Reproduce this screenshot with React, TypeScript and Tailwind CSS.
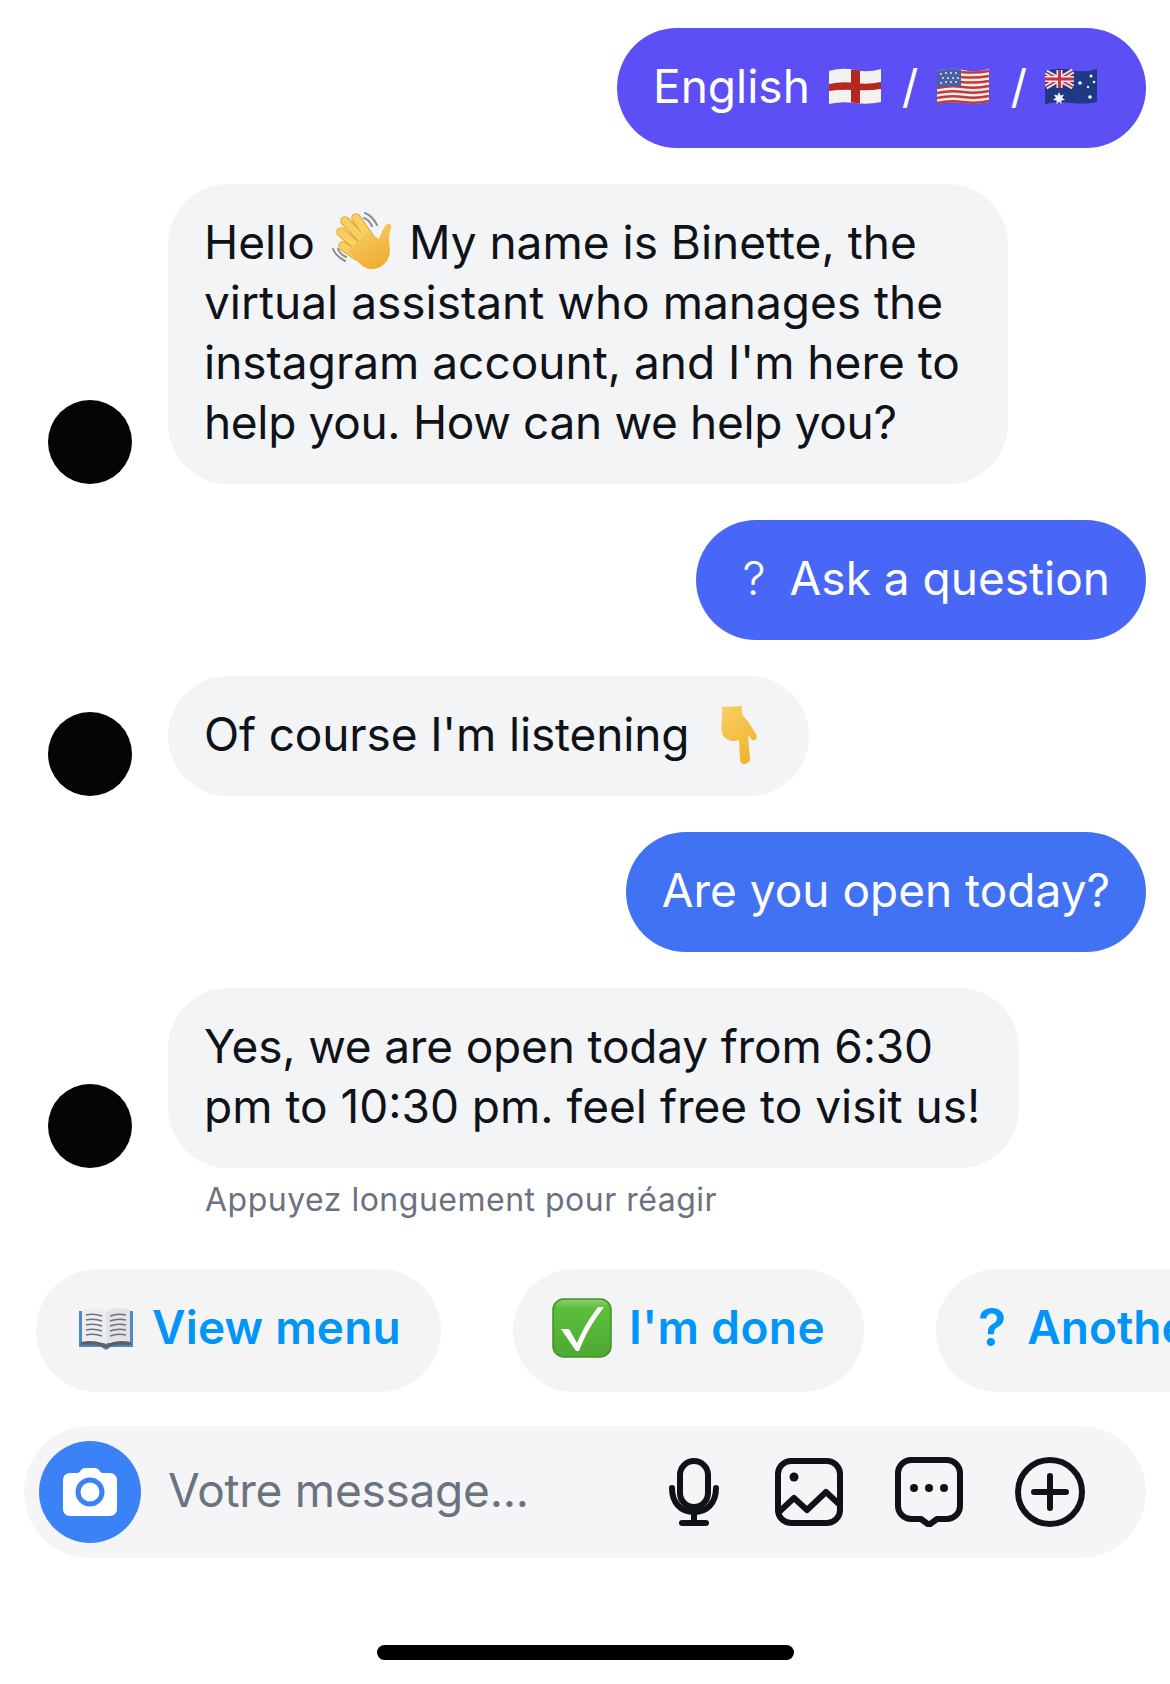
import type { ReactNode } from "react";

function EnglandFlag() {
  return (
    <svg viewBox="0 0 54 40" className="w-[54px] h-[40px] shrink-0">
      <path d="M1 5q13-4 26-1t26-1v33q-13 3-26 1T1 38z" fill="#f4f2f0" />
      <path d="M23 3.400l9 1v33l-9-1z" fill="#b5281f" />
      <path d="M1 18q13-3 26-1t26-1v7q-13 2-26 1T1 25z" fill="#b5281f" />
    </svg>
  );
}

function UsFlag() {
  return (
    <svg viewBox="0 0 54 40" className="w-[54px] h-[40px] shrink-0">
      <path d="M1 5q13-4 26-1t26-1v33q-13 3-26 1T1 38z" fill="#f3eeee" />
      <g stroke="#c13a36" strokeWidth="2.500" fill="none">
        <path d="M25 6q14 1.500 28-1" />
        <path d="M25 11q14 1.500 28-1" />
        <path d="M25 16q14 1.500 28-1" />
        <path d="M1 22q13-3 26-1t26-1" />
        <path d="M1 27q13-3 26-1t26-1" />
        <path d="M1 32q13-3 26-1t26-1" />
        <path d="M1 37q13-3 26-1t26-1" />
      </g>
      <path d="M1 5q12-3.500 24-1.500v17q-12-1.500-24 1z" fill="#4a5fa5" />
      <g fill="#dfe4f2">
        <circle cx="5" cy="8" r="1" />
        <circle cx="10" cy="7" r="1" />
        <circle cx="15" cy="7" r="1" />
        <circle cx="20" cy="7" r="1" />
        <circle cx="7" cy="12" r="1" />
        <circle cx="12" cy="12" r="1" />
        <circle cx="17" cy="12" r="1" />
        <circle cx="22" cy="12" r="1" />
        <circle cx="5" cy="17" r="1" />
        <circle cx="10" cy="16" r="1" />
        <circle cx="15" cy="16" r="1" />
        <circle cx="20" cy="16" r="1" />
      </g>
    </svg>
  );
}

function AuFlag() {
  return (
    <svg viewBox="0 0 54 40" className="w-[54px] h-[40px] shrink-0">
      <path d="M1 5q13-4 26-1t26-1v33q-13 3-26 1T1 38z" fill="#1f3a85" />
      <path d="M2 6l27 15M29 5L2 21" stroke="#f1e7ea" strokeWidth="5" />
      <path d="M2 6l27 15M29 5L2 21" stroke="#c9334a" strokeWidth="1.500" />
      <path d="M15.500 4v18M1 13h29" stroke="#f1e7ea" strokeWidth="6" />
      <path d="M15.500 4v18M1 13h29" stroke="#c9334a" strokeWidth="3" />
      <g fill="#f4f4f8">
        <path d="M15 26l1.400 3.600 3.700-1-2 3.200 3 2.300-3.800.400.200 3.800-2.500-2.800-2.500 2.800.200-3.800-3.800-.400 3-2.300-2-3.200 3.700 1z" />
        <circle cx="36" cy="17" r="1.800" />
        <circle cx="47" cy="10" r="1.500" />
        <circle cx="50" cy="16" r="1.300" />
        <circle cx="44" cy="21" r="1.200" />
        <circle cx="46" cy="31" r="1.800" />
      </g>
    </svg>
  );
}

function WaveEmoji() {
  return (
    <svg viewBox="0 0 60 60" className="w-[60px] h-[60px] shrink-0">
      <defs>
        <linearGradient id="hand" x1="0.2" y1="0" x2="0.7" y2="1">
          <stop offset="0" stopColor="#f8d066" />
          <stop offset="1" stopColor="#efab2f" />
        </linearGradient>
      </defs>
      <g strokeLinecap="round" fill="none">
        <g stroke="#e8a32c" strokeWidth="9.500">
          <path d="M38 26L24 6M32 29L13 9M27 36L9 20M25 44L11 34" />
        </g>
        <g stroke="#f8cf62" strokeWidth="7.500">
          <path d="M38 26L24 6M32 29L13 9M27 36L9 20M25 44L11 34" />
        </g>
      </g>
      <path
        d="M16 39L36 20L47 27C49 22 51 16 54 13C57 10 60 12 59 16C56 24 57 30 58 38C58 50 48 58 38 57C30 56 24 48 16 39z"
        fill="url(#hand)"
      />
      <path d="M33 1c5 2 9 6 12 12M32 6c3 1 6 4 8 8" stroke="#8a8d92" strokeWidth="2" fill="none" strokeLinecap="round" />
      <path d="M1 37c2 5 6 9 12 12M6 37c1 3 4 6 8 8" stroke="#8a8d92" strokeWidth="2" fill="none" strokeLinecap="round" />
    </svg>
  );
}

function PointDownEmoji() {
  return (
    <svg viewBox="0 0 40 60" className="w-[40px] h-[60px] shrink-0">
      <defs>
        <linearGradient id="point" x1="0" y1="0" x2="0.6" y2="1">
          <stop offset="0" stopColor="#f8d060" />
          <stop offset="1" stopColor="#f0b432" />
        </linearGradient>
      </defs>
      <path
        d="M2 3L22 2C22 6 22 9 23 12C28 16 32 24 36 30C38 34 36 37 33 36C31 36 30 33 28 31L30 55C30 59 26 60 24 60C21 60 20 57 20 55L19 36C14 38 8 37 4 33C-1 27 3 15 2 3z"
        fill="url(#point)"
      />
    </svg>
  );
}

function BookEmoji() {
  return (
    <svg viewBox="0 0 56 44" className="w-[56px] h-[44px] shrink-0">
      <path d="M1 5v36h22l5 3 5-3h22V5h-3v32H4V5z" fill="#4d8ac2" />
      <path d="M4 4c9-3 18-3 24 2v32c-6-4-15-4-24-2z" fill="#ecedef" />
      <path d="M52 4c-9-3-18-3-24 2v32c6-4 15-4 24-2z" fill="#e2e3e6" />
      <path d="M3 36c9-2 19-1 25 3 6-4 16-5 25-3v3c-9-1-19 0-25 3-6-3-16-4-25-3z" fill="#5f6063" />
      <g stroke="#6f7278" strokeWidth="1.500" fill="none">
        <path d="M8 9q8-2 16 1M8 14q8-2 16 1M8 19q8-2 16 1M8 24q8-2 16 1M8 29q8-2 16 1" />
        <path d="M48 9q-8-2-16 1M48 14q-8-2-16 1M48 19q-8-2-16 1M48 24q-8-2-16 1M48 29q-8-2-16 1" />
      </g>
    </svg>
  );
}

function CheckEmoji() {
  return (
    <svg viewBox="0 0 60 60" className="w-[60px] h-[60px] shrink-0">
      <defs>
        <linearGradient id="check" x1="0" y1="0" x2="0" y2="1">
          <stop offset="0" stopColor="#8fd076" />
          <stop offset="0.15" stopColor="#5cbf3a" />
          <stop offset="1" stopColor="#4fa933" />
        </linearGradient>
      </defs>
      <rect x="1" y="1" width="58" height="58" rx="11" fill="url(#check)" stroke="#3f9126" strokeWidth="1.500" />
      <path d="M9 31h8l8 14c6-14 12-24 21-36h6C40 25 33 37 27 53h-3z" fill="#fff" />
    </svg>
  );
}

function Avatar() {
  return <div className="w-[84px] h-[84px] rounded-full bg-[#050507] shrink-0" />;
}

function Incoming({ children, width }: { children: ReactNode; width: string }) {
  return (
    <div className="flex items-end pl-12 gap-9">
      <Avatar />
      <div className={`${width} bg-[#f3f4f6] rounded-[60px] px-9 pt-[28px] pb-[32px] text-[46px] leading-[60px] text-[#0f1218] whitespace-nowrap`}>
        {children}
      </div>
    </div>
  );
}

function Outgoing({ children, color }: { children: ReactNode; color: string }) {
  return (
    <div className="flex justify-end pr-6">
      <div className={`${color} rounded-[60px] h-[120px] pb-1 flex items-center text-[46px] text-white whitespace-nowrap`}>
        {children}
      </div>
    </div>
  );
}

function QuickReply({ children, width }: { children: ReactNode; width: string }) {
  return (
    <div className={`${width} h-[123px] pb-[6px] shrink-0 rounded-[62px] bg-[#f4f4f4] flex items-center font-semibold text-[46px] text-[#0095f6] whitespace-nowrap`}>
      {children}
    </div>
  );
}

export default function App() {
  return (
    <div className="w-[1170px] h-[1684px] bg-white overflow-hidden flex flex-col font-['Inter','Liberation_Sans',sans-serif]">
      <div className="flex flex-col gap-9 pt-7">
        <Outgoing color="bg-[#5b4ff5] pl-9 pr-12">
          <span>English</span>
          <span className="ml-[18px]"><EnglandFlag /></span>
          <span className="ml-[20px]">/</span>
          <span className="ml-[18px]"><UsFlag /></span>
          <span className="ml-[20px]">/</span>
          <span className="ml-[17px]"><AuFlag /></span>
        </Outgoing>

        <Incoming width="w-[840px]">
          <p className="flex items-center h-[60px]">
            <span>Hello</span>
            <span className="mx-[17px]"><WaveEmoji /></span>
            <span>My name is Binette, the</span>
          </p>
          <p>virtual assistant who manages the</p>
          <p>instagram account, and I'm here to</p>
          <p className="tracking-[-0.33px]">help you. How can we help you?</p>
        </Incoming>

        <Outgoing color="bg-[#4967f7] pl-[47px] pr-9">
          <span className="mr-6 font-light">?</span>
          <span>Ask a question</span>
        </Outgoing>

        <Incoming width="w-[641px]">
          <p className="flex items-center h-[60px]">
            <span className="tracking-[-0.14px]">Of course I'm listening</span>
            <span className="ml-[31px]"><PointDownEmoji /></span>
          </p>
        </Incoming>

        <Outgoing color="bg-[#4172f4] px-9">Are you open today?</Outgoing>

        <Incoming width="w-[851px]">
          <p className="tracking-[-0.17px]">Yes, we are open today from 6:30</p>
          <p>pm to 10:30 pm. feel free to visit us!</p>
        </Incoming>
      </div>

      <p className="pl-[205px] mt-3 text-[32px] leading-[40px] tracking-[0.5px] text-[#6b7280]">Appuyez longuement pour réagir</p>

      <div className="flex gap-[72px] pl-9 mt-[49px]">
        <QuickReply width="w-[405px]">
          <span className="ml-[42px] mr-[18px]"><BookEmoji /></span>
          <span className="tracking-[0.2px]">View menu</span>
        </QuickReply>
        <QuickReply width="w-[351px]">
          <span className="ml-[39px] mr-[17px]"><CheckEmoji /></span>
          <span className="tracking-[0.4px]">I'm done</span>
        </QuickReply>
        <QuickReply width="w-[400px]">
          <span className="ml-[42px] mr-[21px] text-[52px]">?</span>
          <span>Another</span>
        </QuickReply>
      </div>

      <div className="ml-6 mt-[34px] h-[132px] w-[1122px] rounded-[66px] bg-[#f5f5f7] flex items-center pl-[15px] shrink-0">
        <div className="w-[102px] h-[102px] rounded-full bg-[#3b82f6] flex items-center justify-center shrink-0">
          <svg viewBox="0 0 56 56" className="w-14 h-14">
            <path
              d="M8 9h7c2 0 3-1 4-3 1-1 2-2 4-2h10c2 0 3 1 4 2 1 2 2 3 4 3h7c4 0 7 3 7 7v29c0 4-3 7-7 7H8c-4 0-7-3-7-7V16c0-4 3-7 7-7z"
              fill="#fff"
            />
            <circle cx="28" cy="28" r="12" fill="none" stroke="#3b82f6" strokeWidth="5" />
          </svg>
        </div>
        <span className="ml-[27px] pb-1 text-[46px] tracking-[-0.25px] text-[#6b7280]">Votre message...</span>
        <div className="ml-auto mr-[61px] flex items-center text-[#0f1218]">
          <svg viewBox="0 0 54 68" className="w-[54px] h-[68px]" fill="none" stroke="currentColor" strokeWidth="6" strokeLinecap="round">
            <rect x="13" y="3" width="28" height="46" rx="14" />
            <path d="M5 30c0 15 9 24 22 24s22-9 22-24M27 54v10M15 65h24" />
          </svg>
          <svg viewBox="0 0 68 68" className="w-[68px] h-[68px] ml-[54px]" fill="none" stroke="currentColor" strokeWidth="6" strokeLinecap="round" strokeLinejoin="round">
            <rect x="3" y="3" width="62" height="62" rx="13" />
            <circle cx="19" cy="19" r="4.500" fill="currentColor" stroke="none" />
            <path d="M4 54l15-14 13 12 19-18 14 13" />
          </svg>
          <svg viewBox="0 0 68 70" className="w-[68px] h-[70px] ml-[52px]" fill="none" stroke="currentColor" strokeWidth="6" strokeLinecap="round" strokeLinejoin="round">
            <path d="M16 3h36c7 0 13 6 13 13v33c0 7-6 13-13 13H42l-8 6-8-6H16C9 62 3 56 3 49V16C3 9 9 3 16 3z" />
            <circle cx="19" cy="31" r="4" fill="currentColor" stroke="none" />
            <circle cx="34" cy="31" r="4" fill="currentColor" stroke="none" />
            <circle cx="49" cy="31" r="4" fill="currentColor" stroke="none" />
          </svg>
          <svg viewBox="0 0 70 70" className="w-[70px] h-[70px] ml-[52px]" fill="none" stroke="currentColor" strokeWidth="6" strokeLinecap="round">
            <circle cx="35" cy="35" r="32" />
            <path d="M35 19v32M19 35h32" />
          </svg>
        </div>
      </div>

      <div className="mt-[87px] mx-auto w-[417px] h-[15px] rounded-full bg-black shrink-0" />
    </div>
  );
}
